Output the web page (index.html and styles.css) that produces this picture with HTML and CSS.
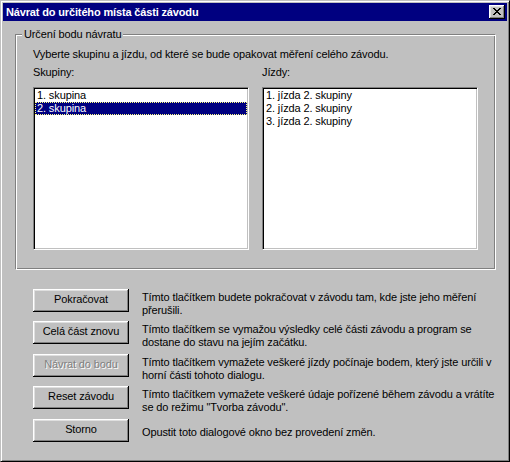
FILE: index.html
```html
<!DOCTYPE html>
<html lang="cs">
<head>
<meta charset="utf-8">
<title>Návrat do určitého místa části závodu</title>
<link rel="stylesheet" href="styles.css">
</head>
<body>
<div class="window">
  <div class="titlebar">
    <span class="title">Návrat do určitého místa části závodu</span>
    <button class="close" type="button" aria-label="Zavřít">
      <svg width="8" height="7" viewBox="0 0 8 7" shape-rendering="crispEdges"><path d="M0 0h2v1H0zM6 0h2v1H6zM1 1h2v1H1zM5 1h2v1H5zM2 2h4v1H2zM3 3h2v1H3zM2 4h4v1H2zM1 5h2v1H1zM5 5h2v1H5zM0 6h2v1H0zM6 6h2v1H6z" fill="#000"/></svg>
    </button>
  </div>
  <div class="client">
    <div class="group">
      <span class="legend">Určení bodu návratu</span>
      <p class="intro">Vyberte skupinu a jízdu, od které se bude opakovat měření celého závodu.</p>
      <div class="lists">
        <div class="col">
          <div class="label">Skupiny:</div>
          <ul class="listbox">
            <li>1. skupina</li>
            <li class="sel">2. skupina</li>
          </ul>
        </div>
        <div class="col">
          <div class="label">Jízdy:</div>
          <ul class="listbox">
            <li>1. jízda 2. skupiny</li>
            <li>2. jízda 2. skupiny</li>
            <li>3. jízda 2. skupiny</li>
          </ul>
        </div>
      </div>
    </div>
    <div class="actions">
      <div class="row">
        <button class="btn" type="button">Pokračovat</button>
        <p class="desc">Tímto tlačítkem budete pokračovat v závodu tam, kde jste jeho měření<br>přerušili.</p>
      </div>
      <div class="row">
        <button class="btn" type="button">Celá část znovu</button>
        <p class="desc">Tímto tlačítkem se vymažou výsledky celé části závodu a program se<br>dostane do stavu na jejím začátku.</p>
      </div>
      <div class="row wide">
        <button class="btn" type="button" disabled>Návrat do bodu</button>
        <p class="desc">Tímto tlačítkem vymažete veškeré jízdy počínaje bodem, který jste určili v<br>horní části tohoto dialogu.</p>
      </div>
      <div class="row">
        <button class="btn" type="button">Reset závodu</button>
        <p class="desc">Tímto tlačítkem vymažete veškeré údaje pořízené během závodu a vrátíte<br>se do režimu "Tvorba závodu".</p>
      </div>
      <div class="row wide">
        <button class="btn" type="button">Storno</button>
        <p class="desc single">Opustit toto dialogové okno bez provedení změn.</p>
      </div>
    </div>
  </div>
</div>
</body>
</html>
```
FILE: styles.css
```css
* {
  box-sizing: border-box;
  margin: 0;
  padding: 0;
}

html,
body {
  background: #c0c0c0;
}

body {
  font: 11px/13px "Liberation Sans", Arial, sans-serif;
  letter-spacing: -0.12px;
  color: #000;
}

.window {
  width: 510px;
  height: 462px;
  background: #c0c0c0;
  border: 1px solid;
  border-color: #c0c0c0 #000 #000 #c0c0c0;
  box-shadow: inset 1px 1px #fff, inset -1px -1px #808080;
  padding: 2px;
}

.titlebar {
  height: 18px;
  background: #000080;
  color: #fff;
  display: flex;
  align-items: center;
  justify-content: space-between;
  padding: 0 2px 0 3px;
}

.title {
  font-weight: bold;
  letter-spacing: -0.15px;
  white-space: nowrap;
}

.close {
  width: 16px;
  height: 14px;
  flex: none;
  background: #c0c0c0;
  border: none;
  box-shadow: inset -1px -1px #000, inset 1px 1px #fff, inset -2px -2px #808080, inset 2px 2px #dfdfdf;
  display: flex;
  align-items: flex-start;
  justify-content: flex-start;
  padding: 3px 0 0 4px;
}

.close svg {
  display: block;
}

.client {
  padding: 13px 12px 0 12px;
}

.group {
  position: relative;
  width: 481px;
  height: 236px;
  border: 1px solid;
  border-color: #808080 #fff #fff #808080;
  box-shadow: inset 1px 1px #fff, inset -1px -1px #808080;
  padding: 13px 17px 0 17px;
}

.legend {
  position: absolute;
  top: -7px;
  left: 6px;
  padding: 0 2px;
  background: #c0c0c0;
  white-space: nowrap;
}

.intro {
  margin-bottom: 4px;
  white-space: nowrap;
}

.lists {
  display: flex;
  gap: 13px;
}

.col {
  width: 216px;
}

.label {
  padding-top: 1px;
  margin-bottom: 8px;
}

.listbox {
  list-style: none;
  height: 163px;
  background: #fff;
  border: 1px solid;
  border-color: #808080 #fff #fff #808080;
  box-shadow: inset 1px 1px #000, inset -1px -1px #c0c0c0;
  padding: 1px;
}

.listbox li {
  height: 13px;
  padding-left: 2px;
  white-space: nowrap;
}

.listbox li.sel {
  background: #000080;
  color: #fff;
  outline: 1px dotted #ffff80;
  outline-offset: -1px;
}

.actions {
  margin-top: 19px;
  padding-left: 18px;
}

.row {
  display: flex;
  align-items: flex-start;
  gap: 13px;
  height: 23px;
}

.row + .row {
  margin-top: 9px;
}

.row.wide {
  margin-top: 10px;
}

.btn {
  width: 96px;
  height: 23px;
  flex: none;
  font: inherit;
  letter-spacing: inherit;
  color: #000;
  background: #c0c0c0;
  border: none;
  box-shadow: inset -1px -1px #000, inset 1px 1px #fff, inset -2px -2px #808080, inset 2px 2px #dfdfdf;
  padding: 0 0 2px;
  white-space: nowrap;
}

.btn:disabled {
  color: #808080;
  text-shadow: 1px 1px #fff;
}

.desc {
  margin-top: 2px;
  white-space: nowrap;
}

.desc.single {
  margin-top: 7px;
}
```
